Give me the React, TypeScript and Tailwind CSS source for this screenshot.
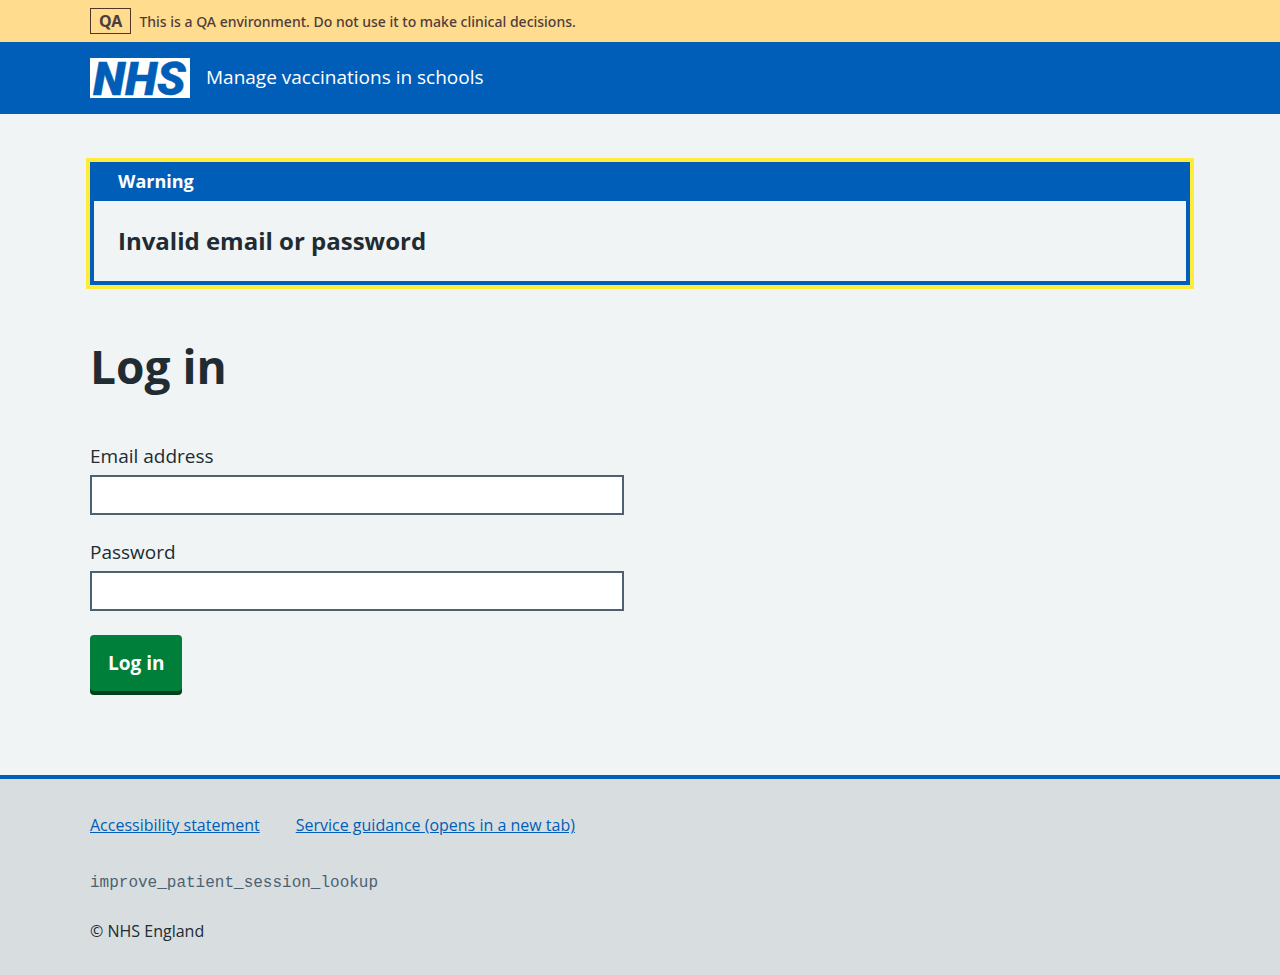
import type { ReactNode } from "react";

function Container({ children }: { children: ReactNode }) {
  return <div className="mx-auto w-full max-w-[1132px] px-4">{children}</div>;
}

function NhsLogo() {
  return (
    <svg role="img" aria-label="NHS" viewBox="0 0 100 40" className="h-10 w-[100px] shrink-0 overflow-visible">
      <rect width="100" height="40" fill="#fff" />
      <text
        x="3"
        y="36.5"
        fill="#005eb8"
        stroke="#005eb8"
        strokeWidth="0.4"
        fontFamily="Roboto, sans-serif"
        fontWeight="900"
        fontStyle="italic"
        fontSize="47"
      >
        NHS
      </text>
    </svg>
  );
}

function EnvironmentBanner() {
  return (
    <div className="bg-[#ffdc8e] py-2 font-['Noto_Sans',sans-serif] text-[#4d3d3d]">
      <Container>
        <div className="flex items-center gap-2">
          <strong className="border border-[#4d3924] px-2 text-base leading-6 font-bold">QA</strong>
          <span className="pt-px text-sm leading-6 font-medium">
            This is a QA environment. Do not use it to make clinical decisions.
          </span>
        </div>
      </Container>
    </div>
  );
}

function Header() {
  return (
    <header className="bg-[#005eb8] py-4 text-white">
      <Container>
        <a href="#" className="flex items-center gap-4 text-[19px] leading-[26px]">
          <NhsLogo />
          <span className="pb-0.5">Manage vaccinations in schools</span>
        </a>
      </Container>
    </header>
  );
}

function WarningBanner() {
  return (
    <section
      role="alert"
      aria-labelledby="banner-title"
      className="border-4 border-[#005eb8] outline-4 outline-[#ffeb3b]"
    >
      <h2 id="banner-title" className="bg-[#005eb8] px-6 pt-px pb-1.5 text-lg leading-7 font-bold text-white">
        Warning
      </h2>
      <p className="p-6 text-2xl leading-8 font-bold">Invalid email or password</p>
    </section>
  );
}

function Field({ id, label, type }: { id: string; label: string; type: string }) {
  return (
    <div className="mb-6">
      <label htmlFor={id} className="mb-1.5 block text-[19px] leading-[26px]">
        {label}
      </label>
      <input
        id={id}
        name={id}
        type={type}
        className="block h-10 w-full border-2 border-[#4c6272] bg-white px-1 text-[19px]"
      />
    </div>
  );
}

export default function App() {
  return (
    <div className="flex min-h-screen flex-col bg-[#d8dde0] font-['Open_Sans',sans-serif] text-[#212b32]">
      <EnvironmentBanner />
      <Header />
      <div className="bg-[#f0f4f5] pt-12 pb-20">
        <Container>
          <main>
            <WarningBanner />
            <h1 className="mt-[50px] mb-[46px] text-[46px] leading-[62px] font-bold">Log in</h1>
            <div className="grid gap-8 md:grid-cols-2">
              <form>
                <Field id="email" label="Email address" type="email" />
                <Field id="password" label="Password" type="password" />
                <button
                  type="button"
                  className="mb-1 block rounded-[4px] bg-[#007f3b] px-[18px] py-[14px] text-[19px] leading-7 font-bold text-white shadow-[0_4px_0_#00401e]"
                >
                  Log in
                </button>
              </form>
            </div>
          </main>
        </Container>
      </div>
      <footer className="grow border-t-4 border-[#005eb8] bg-[#d8dde0] pt-8 pb-8 text-base leading-7">
        <Container>
          <ul className="flex flex-wrap gap-x-9 text-[#005eb8]">
            <li>
              <a href="#" className="underline">Accessibility statement</a>
            </li>
            <li>
              <a href="#" className="underline">Service guidance (opens in a new tab)</a>
            </li>
          </ul>
          <p className="mt-[30px] font-['Liberation_Mono',monospace] text-[#4c6272]">improve_patient_session_lookup</p>
          <p className="mt-5 font-medium">© NHS England</p>
        </Container>
      </footer>
    </div>
  );
}
